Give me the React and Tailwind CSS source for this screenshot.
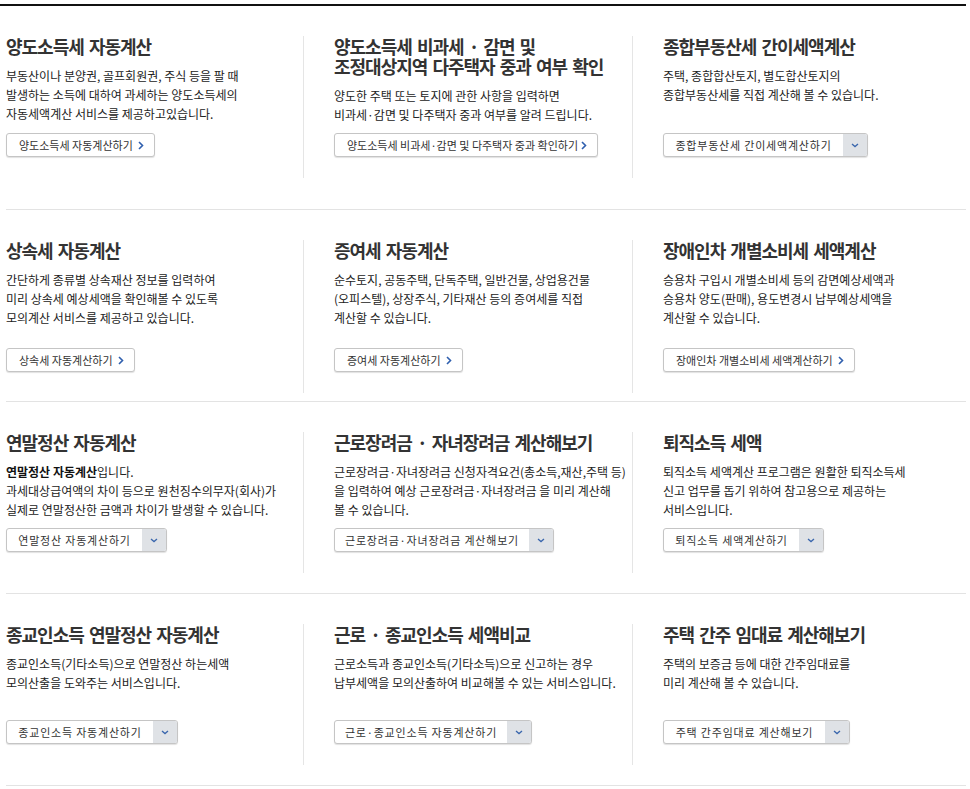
const rows = [
  {
    h: 'h-[204px]', box: 'h-[142px]', text: 'h-[97px]',
    items: [
      {
        title: ['양도소득세 자동계산'],
        desc: ['부동산이나 분양권, 골프회원권, 주식 등을 팔 때', '발생하는 소득에 대하여 과세하는 양도소득세의', '자동세액계산 서비스를 제공하고있습니다.'],
        btn: '양도소득세 자동계산하기', w: 'w-[149px]',
      },
      {
        title: ['양도소득세 비과세 · 감면 및', '조정대상지역 다주택자 중과 여부 확인'],
        desc: ['양도한 주택 또는 토지에 관한 사항을 입력하면', '비과세·감면 및 다주택자 중과 여부를 알려 드립니다.'],
        btn: '양도소득세 비과세·감면 및 다주택자 중과 확인하기', w: 'w-[264px]',
      },
      {
        title: ['종합부동산세 간이세액계산'],
        desc: ['주택, 종합합산토지, 별도합산토지의', '종합부동산세를 직접 계산해 볼 수 있습니다.'],
        btn: '종합부동산세 간이세액계산하기', w: 'w-[205px]', drop: true,
      },
    ],
  },
  {
    h: 'h-[192px]', box: 'h-[153px]', text: 'h-[108px]',
    items: [
      {
        title: ['상속세 자동계산'],
        desc: ['간단하게 종류별 상속재산 정보를 입력하여', '미리 상속세 예상세액을 확인해볼 수 있도록', '모의계산 서비스를 제공하고 있습니다.'],
        btn: '상속세 자동계산하기', w: 'w-[129px]',
      },
      {
        title: ['증여세 자동계산'],
        desc: ['순수토지, 공동주택, 단독주택, 일반건물, 상업용건물', '(오피스텔), 상장주식, 기타재산 등의 증여세를 직접', '계산할 수 있습니다.'],
        btn: '증여세 자동계산하기', w: 'w-[129px]',
      },
      {
        title: ['장애인차 개별소비세 세액계산'],
        desc: ['승용차 구입시 개별소비세 등의 감면예상세액과', '승용차 양도(판매), 용도변경시 납부예상세액을', '계산할 수 있습니다.'],
        btn: '장애인차 개별소비세 세액계산하기', w: 'w-[192px]',
      },
    ],
  },
  {
    h: 'h-[192px]', box: 'h-[141px]', text: 'h-[96px]',
    items: [
      {
        title: ['연말정산 자동계산'],
        desc: [
          <><b className="font-bold text-[#111]">연말정산 자동계산</b>입니다.</>,
          '과세대상급여액의 차이 등으로 원천징수의무자(회사)가',
          '실제로 연말정산한 금액과 차이가 발생할 수 있습니다.',
        ],
        btn: '연말정산 자동계산하기', w: 'w-[161px]', drop: true,
      },
      {
        title: ['근로장려금 · 자녀장려금 계산해보기'],
        desc: ['근로장려금·자녀장려금 신청자격요건(총소득,재산,주택 등)', '을 입력하여 예상 근로장려금·자녀장려금 을 미리 계산해', '볼 수 있습니다.'],
        btn: '근로장려금·자녀장려금 계산해보기', w: 'w-[220px]', drop: true,
      },
      {
        title: ['퇴직소득 세액'],
        desc: ['퇴직소득 세액계산 프로그램은 원활한 퇴직소득세', '신고 업무를 돕기 위하여 참고용으로 제공하는', '서비스입니다.'],
        btn: '퇴직소득 세액계산하기', w: 'w-[161px]', drop: true,
      },
    ],
  },
  {
    h: 'h-[192px]', box: 'h-[141px]', text: 'h-[96px]',
    items: [
      {
        title: ['종교인소득 연말정산 자동계산'],
        desc: ['종교인소득(기타소득)으로 연말정산 하는세액', '모의산출을 도와주는 서비스입니다.'],
        btn: '종교인소득 자동계산하기', w: 'w-[172px]', drop: true,
      },
      {
        title: ['근로 · 종교인소득 세액비교'],
        desc: ['근로소득과 종교인소득(기타소득)으로 신고하는 경우', '납부세액을 모의산출하여 비교해볼 수 있는 서비스입니다.'],
        btn: '근로·종교인소득 자동계산하기', w: 'w-[198px]', drop: true,
      },
      {
        title: ['주택 간주 임대료 계산해보기'],
        desc: ['주택의 보증금 등에 대한 간주임대료를', '미리 계산해 볼 수 있습니다.'],
        btn: '주택 간주임대료 계산해보기', w: 'w-[187px]', drop: true,
      },
    ],
  },
];

function Btn({ label, w, drop }) {
  if (drop) {
    return (
      <a href="#" className={`${w} h-6 flex shrink-0 rounded-[3px] border border-[#c5c5c5] bg-white overflow-hidden shadow-[0_1px_1px_rgba(0,0,0,0.12)]`}>
        <span className="flex-1 flex items-center justify-center whitespace-nowrap text-[11px] tracking-[0.8px] text-[#333]">{label}</span>
        <span className="w-6 flex items-center justify-center bg-[#dfe2e6]">
          <svg width="8" height="5" viewBox="0 0 8 5" fill="none">
            <path d="M1 1l3 2.6L7 1" stroke="#3b67ad" strokeWidth="1.3" />
          </svg>
        </span>
      </a>
    );
  }
  return (
    <a href="#" className={`${w} h-6 flex items-center justify-between shrink-0 pl-3 pr-[10px] rounded-[3px] border border-[#c5c5c5] bg-white shadow-[0_1px_1px_rgba(0,0,0,0.12)]`}>
      <span className="whitespace-nowrap text-[11px] text-[#333]">{label}</span>
      <svg width="6" height="9" viewBox="0 0 6 9" fill="none">
        <path d="M1 1l3.5 3.5L1 8" stroke="#2f5fae" strokeWidth="1.6" />
      </svg>
    </a>
  );
}

function Cell({ item, row, col }) {
  const pad = col === 0 ? '' : 'pl-[30px]';
  const line = col < 2 ? 'border-r border-[#e5e5e5]' : '';
  return (
    <div className={pad}>
      <div className={`${row.box} ${line} flex flex-col`}>
        <div className={row.text}>
          <h3 className="text-[18px] leading-[20px] font-bold tracking-[-1px] [word-spacing:2px] text-[#333]">
            {item.title.map((t, i) => <div key={i} className="whitespace-nowrap">{t}</div>)}
          </h3>
          <div className="mt-[10px] text-[12px] leading-[19px] text-[#222]">
            {item.desc.map((d, i) => <div key={i} className="whitespace-nowrap">{d}</div>)}
          </div>
        </div>
        <Btn label={item.btn} w={item.w} drop={item.drop} />
      </div>
    </div>
  );
}

export default function App() {
  return (
    <div className="w-[970px] min-h-[789px] bg-white pt-1 font-['Noto_Sans_CJK_KR','Noto_Sans',sans-serif]">
      <div className="w-[966px] h-[2px] bg-[#111]" />
      <div className="ml-[6px] w-[960px]">
        {rows.map((row, r) => (
          <div key={r} className={`${row.h} pt-[30px] border-b border-[#e3e3e3] grid grid-cols-[298px_329px_1fr]`}>
            {row.items.map((item, c) => <Cell key={c} item={item} row={row} col={c} />)}
          </div>
        ))}
      </div>
    </div>
  );
}
